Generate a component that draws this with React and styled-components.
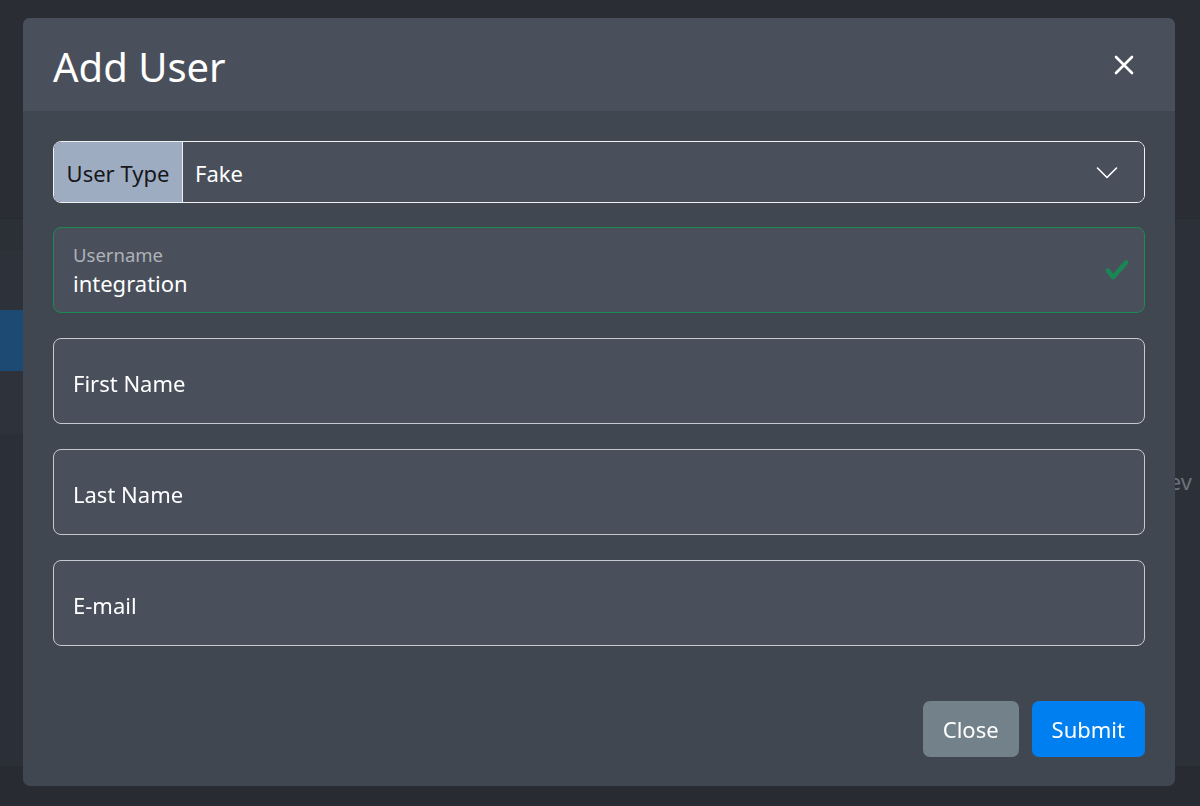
import React from "react";
import styled, { createGlobalStyle } from "styled-components";

const GlobalStyle = createGlobalStyle`
  * { box-sizing: border-box; }
  html, body { margin: 0; padding: 0; }
  body {
    background: #2a2d34;
    font-family: "Noto Sans", "Open Sans", Arial, sans-serif;
    overflow: hidden;
  }
`;

const Page = styled.div`
  width: 1200px;
  height: 806px;
  display: flex;
  flex-direction: column;
  background: #2a2d34;
`;

const TopBar = styled.div`
  height: 219px;
  background: #2a2d34;
  border-bottom: 1px solid #272a30;
`;

const Main = styled.div`
  flex: 0 0 547px;
  display: flex;
`;

const Sidebar = styled.div`
  width: 240px;
  display: flex;
  flex-direction: column;
  background: #2b2f37;
`;

const SideRow = styled.div`
  height: ${(p) => p.h}px;
  background: ${(p) => p.bg};
`;

const Content = styled.div`
  flex: 1;
  background: #2c3038;
  display: flex;
  flex-direction: column;
  padding-top: 247px;
`;

const PagerRow = styled.div`
  display: flex;
  justify-content: flex-end;
  padding-right: 8px;
  font-size: 22px;
  line-height: 30px;
  color: #6b727b;
`;

const Footer = styled.div`
  flex: 1;
  background: #282b32;
`;

const Overlay = styled.div`
  position: fixed;
  inset: 0;
  padding: 18px 0 0 23px;
`;

const Modal = styled.div`
  width: 1152px;
  height: 768px;
  background: #414751;
  border-radius: 7px;
  overflow: hidden;
  display: flex;
  flex-direction: column;
`;

const Header = styled.div`
  height: 93px;
  background: #4a505b;
  display: flex;
  align-items: center;
  justify-content: space-between;
  padding: 0 41px 0 30px;
`;

const Title = styled.h1`
  margin: 0;
  font-size: 40px;
  font-weight: 400;
  color: #ffffff;
  line-height: 1.2;
  padding-top: 4px;
`;

const CloseX = styled.button`
  border: 0;
  background: transparent;
  padding: 0;
  width: 20px;
  height: 20px;
  display: flex;
  cursor: pointer;
`;

const Body = styled.div`
  padding: 30px 30px 0;
  display: flex;
  flex-direction: column;
  gap: 25px;
`;

const InputGroup = styled.div`
  height: 62px;
  display: flex;
  border: 1px solid #eef0f2;
  border-radius: 8px;
  overflow: hidden;
  margin-bottom: -1px;
`;

const GroupLabel = styled.div`
  width: 129px;
  background: #9eacc2;
  color: #15171a;
  font-size: 22px;
  display: flex;
  align-items: center;
  justify-content: center;
  padding-top: 1px;
  border-right: 1px solid #eef0f2;
`;

const SelectBox = styled.div`
  flex: 1;
  background: #4a505b;
  color: #ffffff;
  font-size: 22px;
  display: flex;
  align-items: center;
  justify-content: space-between;
  padding: 1px 26px 0 12px;
`;

const Field = styled.div`
  height: 86px;
  border: 1px solid ${(p) => (p.valid ? "#1c8a55" : "#c6cad0")};
  border-radius: 8px;
  background: #4a505b;
  display: flex;
  align-items: center;
  justify-content: space-between;
  padding: 0 14px 0 19px;
`;

const FieldText = styled.div`
  display: flex;
  flex-direction: column;
  padding-top: 2px;
`;

const FloatLabel = styled.span`
  font-size: 18.5px;
  color: #aeb2b9;
  line-height: 24px;
`;

const FieldValue = styled.span`
  font-size: 22px;
  color: #ffffff;
  line-height: 32px;
`;

const Placeholder = styled.span`
  font-size: 22px;
  color: #ffffff;
  line-height: 30px;
  padding-top: 4px;
`;

const FooterBar = styled.div`
  margin-top: auto;
  display: flex;
  justify-content: flex-end;
  gap: 13px;
  padding: 0 30px 29px;
`;

const Button = styled.button`
  height: 56px;
  padding: 0 20px;
  border: 0;
  border-radius: 7px;
  font-family: inherit;
  font-size: 22px;
  color: #ffffff;
  background: ${(p) => (p.primary ? "#0080f0" : "#73828a")};
  cursor: pointer;
`;

export default function App() {
  return (
    <>
      <GlobalStyle />
      <Page>
        <TopBar />
        <Main>
          <Sidebar>
            <SideRow h={31} bg="#2b2f36" />
            <SideRow h={60} bg="#2d3139" />
            <SideRow h={61} bg="#1c4a72" />
            <SideRow h={63} bg="#2e323a" />
          </Sidebar>
          <Content>
            <PagerRow>Prev</PagerRow>
          </Content>
        </Main>
        <Footer />
      </Page>
      <Overlay>
        <Modal>
          <Header>
            <Title>Add User</Title>
            <CloseX aria-label="Close">
              <svg width="20" height="20" viewBox="0 0 20 20">
                <path
                  d="M2 2 L18 18 M18 2 L2 18"
                  stroke="#ffffff"
                  strokeWidth="2.6"
                  strokeLinecap="round"
                />
              </svg>
            </CloseX>
          </Header>
          <Body>
            <InputGroup>
              <GroupLabel>User Type</GroupLabel>
              <SelectBox>
                <span>Fake</span>
                <svg width="22" height="14" viewBox="0 0 22 14">
                  <path
                    d="M1.5 2 L11 11.5 L20.5 2"
                    fill="none"
                    stroke="#ffffff"
                    strokeWidth="1.6"
                    strokeLinecap="round"
                    strokeLinejoin="round"
                  />
                </svg>
              </SelectBox>
            </InputGroup>
            <Field valid>
              <FieldText>
                <FloatLabel>Username</FloatLabel>
                <FieldValue>integration</FieldValue>
              </FieldText>
              <svg width="26" height="26" viewBox="0 0 8 8">
                <path
                  fill="#198754"
                  d="M2.3 6.73.6 4.53c-.4-1.04.46-1.4 1.1-.8l1.1 1.4 3.4-3.8c.6-.63 1.6-.27 1.2.7l-4 4.6c-.43.5-.8.4-1.1.1z"
                />
              </svg>
            </Field>
            <Field>
              <Placeholder>First Name</Placeholder>
            </Field>
            <Field>
              <Placeholder>Last Name</Placeholder>
            </Field>
            <Field>
              <Placeholder>E-mail</Placeholder>
            </Field>
          </Body>
          <FooterBar>
            <Button>Close</Button>
            <Button primary>Submit</Button>
          </FooterBar>
        </Modal>
      </Overlay>
    </>
  );
}
